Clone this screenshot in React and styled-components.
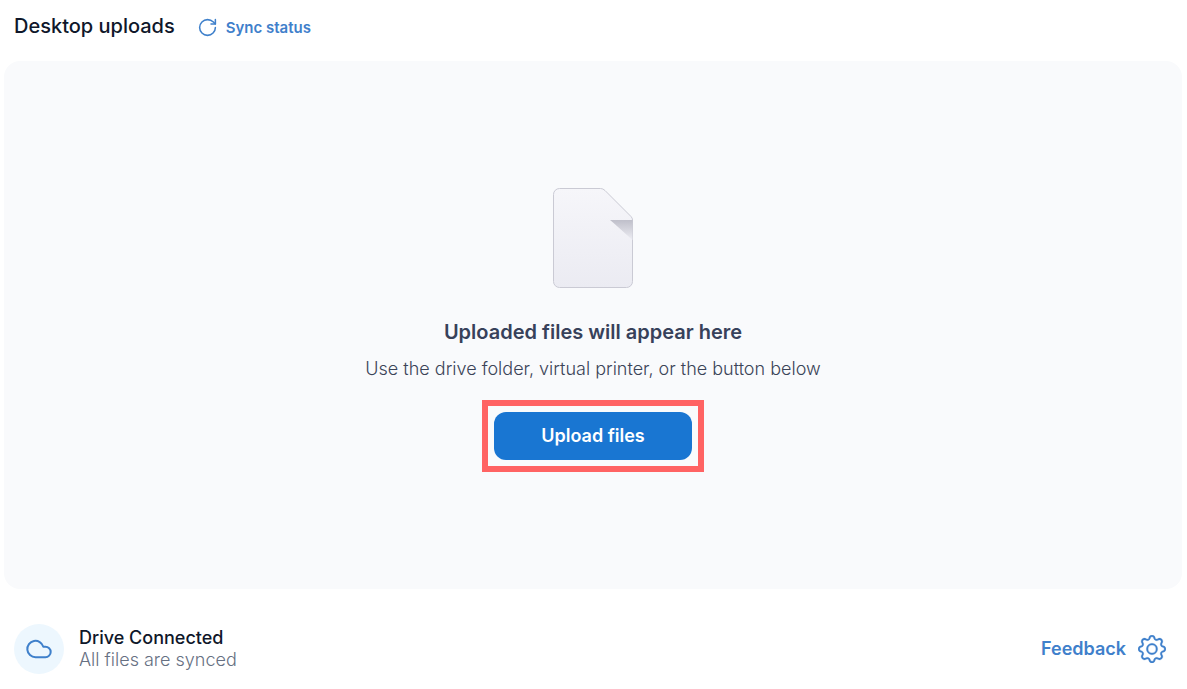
import styled, { createGlobalStyle } from "styled-components"
import { BsGear } from "react-icons/bs"
import { Cloud, RotateCw } from "lucide-react"


const GlobalStyle=createGlobalStyle`
*{
  box-sizing: border-box;
}

body{
  margin: 0;
  background-color: #ffffff;
  font-family: Inter, "Liberation Sans", sans-serif;
}
`

const Container=styled.div`
display: flex;
flex-direction: column;
min-height: 100vh;
padding: 0 5px 0 4px;
`

const Header=styled.header`
display: flex;
align-items: center;
gap: 22px;
height: 61px;
padding: 0 10px 10px;
`

const Title=styled.h1`
margin: 0;
font-size: 20px;
line-height: 24px;
font-weight: 500;
color: #0f172a;
`

const SyncButton=styled.button`
display: flex;
align-items: center;
gap: 8px;
padding: 4px 0 0;
border: none;
background-color: transparent;
font-family: inherit;
font-size: 15px;
line-height: 20px;
font-weight: 600;
color: #3f80cb;
cursor: pointer;
`

const DropArea=styled.main`
display: flex;
flex: 1;
flex-direction: column;
align-items: center;
justify-content: center;
padding-top: 10px;
border-radius: 16px;
background-color: #f9fafc;
`

const EmptyTitle=styled.h2`
margin: 32px 0 0;
font-size: 20px;
line-height: 24px;
font-weight: 600;
color: #37415a;
`

const EmptyText=styled.p`
margin: 13px 0 0;
font-size: 18px;
line-height: 24px;
font-weight: 300;
color: #3b4458;
`

const Highlight=styled.div`
margin-top: 19px;
padding: 6px;
border: 6px solid #ff6363;
background-color: #f9fbfc;
`

const UploadButton=styled.button`
padding: 12px 47px;
border: none;
border-radius: 12px;
background-color: #1976d2;
font-family: inherit;
font-size: 18px;
line-height: 24px;
font-weight: 600;
color: #ffffff;
cursor: pointer;
`

const Footer=styled.footer`
display: flex;
align-items: center;
justify-content: space-between;
height: 100px;
padding: 20px 16px 0 10px;
`

const Status=styled.div`
display: flex;
align-items: center;
gap: 15px;
`

const CloudBadge=styled.div`
display: flex;
align-items: center;
justify-content: center;
width: 50px;
height: 50px;
border-radius: 50%;
background-color: #edf7fe;
color: #3f80cb;
`

const StatusText=styled.div`
font-size: 18px;
line-height: 22px;
font-weight: ${({$strong})=>$strong ? 500 : 300};
color: ${({$strong})=>$strong ? "#0f172a" : "#667082"};
`

const Actions=styled.div`
display: flex;
align-items: center;
gap: 12px;
`

const FeedbackLink=styled.a`
font-size: 18px;
line-height: 24px;
font-weight: 600;
color: #3f80cb;
text-decoration: none;
`

const IconButton=styled.button`
display: flex;
padding: 0;
border: none;
background-color: transparent;
color: #3f80cb;
cursor: pointer;
`

const FileIcon=()=>{
  return (
    <svg width="80" height="100" viewBox="0 0 80 100" aria-hidden="true">
      <defs>
        <linearGradient id="page" x1="0" y1="0" x2="0" y2="1">
          <stop offset="0" stopColor="#f6f6fa"/>
          <stop offset="1" stopColor="#ebebf2"/>
        </linearGradient>
        <linearGradient id="fold" x1="0" y1="0" x2="0" y2="1">
          <stop offset="0" stopColor="#bfbfca"/>
          <stop offset="1" stopColor="#ededf3"/>
        </linearGradient>
      </defs>
      <path
        d="M6.5 .5H47.500Q50 .5 52 2.500L78 28.500Q79.500 30 79.500 32V93.500A6 6 0 0 1 73.500 99.500H6.500A6 6 0 0 1 .5 93.500V6.500A6 6 0 0 1 6.500 .5Z"
        fill="url(#page)"
        stroke="#cacad4"
      />
      <path d="M57 32H79.500V52L60 34.500Q58.500 33 57 32Z" fill="url(#fold)"/>
    </svg>
  )
}

const App=()=>{
  return (
    <Container>
      <GlobalStyle/>
      <Header>
        <Title>Desktop uploads</Title>
        <SyncButton type="button">
          <RotateCw size={21} strokeWidth={1.75}/>
          Sync status
        </SyncButton>
      </Header>

      <DropArea>
        <FileIcon/>
        <EmptyTitle>Uploaded files will appear here</EmptyTitle>
        <EmptyText>Use the drive folder, virtual printer, or the button below</EmptyText>
        <Highlight>
          <UploadButton type="button">Upload files</UploadButton>
        </Highlight>
      </DropArea>

      <Footer>
        <Status>
          <CloudBadge>
            <Cloud size={28} strokeWidth={1.75}/>
          </CloudBadge>
          <div>
            <StatusText $strong>Drive Connected</StatusText>
            <StatusText>All files are synced</StatusText>
          </div>
        </Status>
        <Actions>
          <FeedbackLink href="#feedback">Feedback</FeedbackLink>
          <IconButton type="button" aria-label="Settings">
            <BsGear size={28} strokeWidth={0.15}/>
          </IconButton>
        </Actions>
      </Footer>
    </Container>
  )
}
export default App
